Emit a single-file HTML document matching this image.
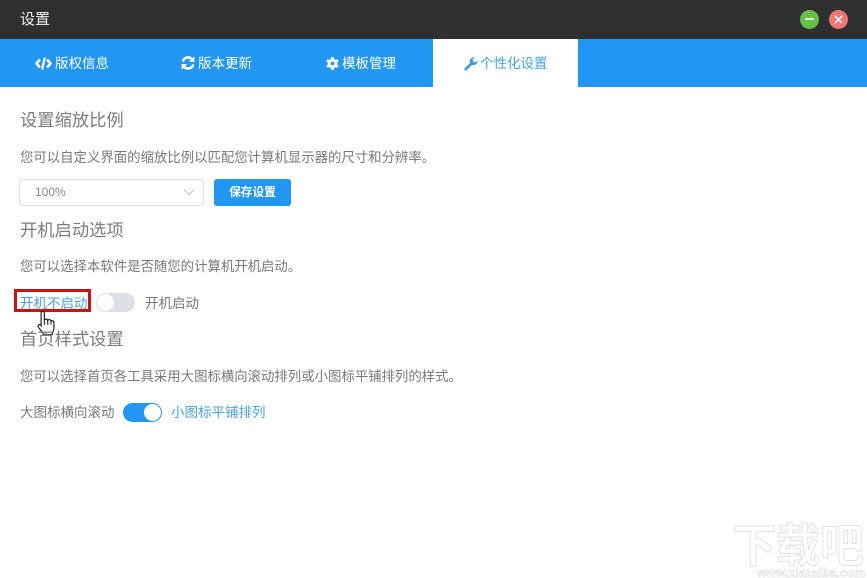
<!DOCTYPE html>
<html lang="zh">
<head>
<meta charset="utf-8">
<title>设置</title>
<style>
html,body{margin:0;padding:0;background:#fff}
body{width:867px;height:578px;position:relative;overflow:hidden;font-family:"Liberation Sans","Noto Sans CJK SC",sans-serif;color:#666}
.a{position:absolute;white-space:nowrap;line-height:20px}
.titlebar{position:absolute;left:0;top:0;width:867px;height:39px;background:#2f3032}
.tabs{position:absolute;left:0;top:39px;width:867px;height:48px;background:#2196f3}
.active{position:absolute;left:433px;top:39px;width:145px;height:48px;background:#fff}
.tab{font-size:13.5px;color:#fff}
h3{margin:0;font-weight:400;font-size:17.3px;color:#7c7c7c}
.p{font-size:13.4px;color:#797979}
.l{font-size:13.5px;color:#797979}
.blue{color:#4aa3e2}
svg{position:absolute;display:block}
</style>
</head>
<body>
<div class="titlebar"></div>
<div class="a" style="left:20px;top:10px;font-size:15px;color:#f0f0f0">设置</div>
<div class="a" style="left:800px;top:10px;width:19px;height:19px;border-radius:50%;background:#67c047"></div>
<div class="a" style="left:805px;top:18px;width:9px;height:2px;background:#e6f6df"></div>
<div class="a" style="left:829px;top:10px;width:19px;height:19px;border-radius:50%;background:#f07676"></div>
<svg style="left:829px;top:10px" width="19" height="19" viewBox="0 0 19 19"><path d="M6 6L13 13M13 6L6 13" stroke="#ffeaea" stroke-width="1.8"/></svg>

<div class="tabs"></div>
<div class="active"></div>
<svg style="left:35px;top:57px" width="17" height="13" viewBox="0 0 17 13"><path d="M5 2.5L1.5 6.5L5 10.5M12 2.5L15.5 6.5L12 10.5" fill="none" stroke="#fff" stroke-width="2.6"/><path d="M9.8 .5L7.2 12.5" stroke="#fff" stroke-width="2.2"/></svg>
<div class="a tab" style="left:55px;top:54px">版权信息</div>
<svg style="left:181px;top:56px" width="14" height="14" viewBox="0 0 14 14"><path d="M1.8 5.6A5.4 5.4 0 0 1 11 3.2" fill="none" stroke="#fff" stroke-width="2.6"/><path d="M13.4 .4V6H7.8Z" fill="#fff"/><path d="M12.2 8.4A5.4 5.4 0 0 1 3 10.8" fill="none" stroke="#fff" stroke-width="2.6"/><path d="M.6 13.6V8H6.2Z" fill="#fff"/></svg>
<div class="a tab" style="left:198px;top:54px">版本更新</div>
<svg style="left:326px;top:57px" width="13" height="13" viewBox="0 0 13 13"><circle cx="6.5" cy="6.5" r="3.4" fill="none" stroke="#fff" stroke-width="3"/><path d="M6.5 0V13M.9 3.2L12.1 9.8M.9 9.8L12.1 3.2" stroke="#fff" stroke-width="2.6" stroke-dasharray="2.4 8.2"/></svg>
<div class="a tab" style="left:342px;top:54px">模板管理</div>
<svg style="left:464px;top:57px" width="14" height="14" viewBox="0 0 13 13"><path d="M1.8 13L0 11.2L5.6 5.6C4.9 3.2 6 .3 9.9 0L8 2.2L8.6 4.4L10.8 5L12.9 3.1C12.6 6.9 9.6 8 7.4 7.3Z" fill="#3f97dd"/></svg>
<div class="a tab blue" style="left:480px;top:54px">个性化设置</div>

<h3 class="a" style="left:20px;top:110px">设置缩放比例</h3>
<div class="a p" style="left:20px;top:148px">您可以自定义界面的缩放比例以匹配您计算机显示器的尺寸和分辨率。</div>
<div class="a" style="left:19px;top:179px;width:183px;height:25px;border:1px solid #dcdfe6;border-radius:4px"></div>
<div class="a" style="left:35px;top:182px;font-size:12px;color:#8a8a8a">100%</div>
<svg style="left:183px;top:188px" width="12" height="8" viewBox="0 0 12 8"><path d="M1 1.5L6 6.5L11 1.5" fill="none" stroke="#c0c4cc" stroke-width="1"/></svg>
<div class="a" style="left:214px;top:179px;width:77px;height:27px;background:#2196f3;border-radius:3px;color:#fff;font-size:11.7px;font-weight:700;line-height:28px;text-align:center">保存设置</div>

<h3 class="a" style="left:20px;top:220px">开机启动选项</h3>
<div class="a p" style="left:20px;top:257px">您可以选择本软件是否随您的计算机开机启动。</div>
<div class="a" style="left:14px;top:289px;width:71px;height:17px;border:3px solid #cc1111"></div>
<div class="a l blue" style="left:20px;top:294px">开机不启动</div>
<div class="a" style="left:96px;top:293px;width:39px;height:19px;border-radius:10px;background:#dcdfe6"></div>
<div class="a" style="left:97px;top:294px;width:17px;height:17px;border-radius:50%;background:#fff"></div>
<div class="a l" style="left:145px;top:294px">开机启动</div>
<svg style="left:36px;top:310px" width="20" height="26" viewBox="0 0 18 24"><path d="M4.5 14.5V2.8C4.5 .8 7.5 .8 7.5 2.8V9.5C8 8 10.3 8 10.6 9.7C11.2 8.4 13.3 8.5 13.6 10.2C14.3 9.4 16.3 9.8 16.3 11.7V16.5C16.3 19 15.2 20.2 14.7 22.8H6.8C6 20.5 4.2 19 2.2 16.2C.8 14 3 12.4 4.5 14.5Z" fill="#fff" stroke="#222" stroke-width="1.1"/><path d="M7.5 9.5V13.5M10.6 9.7V13.5M13.6 10.2V13.5" stroke="#222" stroke-width="1"/></svg>

<h3 class="a" style="left:20px;top:329px">首页样式设置</h3>
<div class="a p" style="left:20px;top:367px">您可以选择首页各工具采用大图标横向滚动排列或小图标平铺排列的样式。</div>
<div class="a l" style="left:20px;top:403px">大图标横向滚动</div>
<div class="a" style="left:123px;top:403px;width:39px;height:19px;border-radius:10px;background:#2196f3"></div>
<div class="a" style="left:144px;top:404px;width:17px;height:17px;border-radius:50%;background:#fff"></div>
<div class="a l blue" style="left:171px;top:403px">小图标平铺排列</div>

<svg style="left:728px;top:518px" width="139" height="60" viewBox="0 0 139 60">
<text x="4" y="44" font-size="46" textLength="132" lengthAdjust="spacingAndGlyphs" font-family="'Noto Sans CJK SC',sans-serif" font-weight="700" fill="#fff" stroke="#e2e2e2" stroke-width="1">下载吧</text>
<text x="29" y="59" font-size="13" textLength="108" lengthAdjust="spacingAndGlyphs" font-family="'Liberation Sans',sans-serif" font-weight="700" fill="#fff" stroke="#dcdcdc" stroke-width=".6">www.xiazaiba.com</text>
</svg>
</body>
</html>
